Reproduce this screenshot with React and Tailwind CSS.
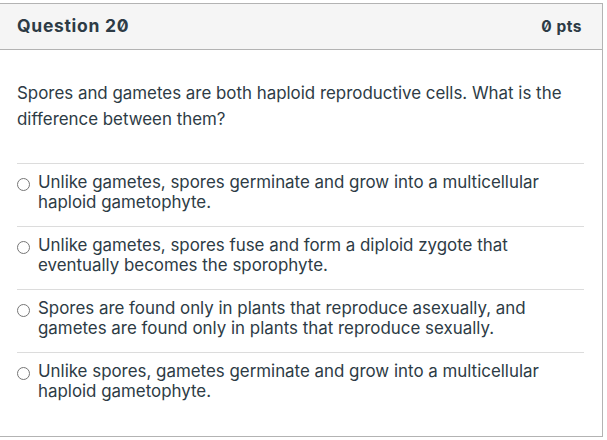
import React from "react";

const options = [
  "Unlike gametes, spores germinate and grow into a multicellular haploid gametophyte.",
  "Unlike gametes, spores fuse and form a diploid zygote that eventually becomes the sporophyte.",
  "Spores are found only in plants that reproduce asexually, and gametes are found only in plants that reproduce sexually.",
  "Unlike spores, gametes germinate and grow into a multicellular haploid gametophyte.",
];

export default function App() {
  return (
    <div className="w-[607px] h-[440px] overflow-hidden bg-white pt-[3px]" style={{ fontFamily: "Inter, 'Liberation Sans', sans-serif" }}>
      <div className="-ml-px w-[604px] h-[434px] border border-[#b3b3b3] text-[#2d3b45]">
        <div className="h-[46px] bg-[#f5f5f5] border-b border-[#b3b3b3] flex items-center justify-between pl-[17px] pr-[20px]">
          <span className="text-[17.5px] font-bold slashed-zero tracking-[0.7px]">Question 20</span>
          <span className="text-[15.5px] font-bold slashed-zero tracking-[0.5px] text-[#2d3b45]">0 pts</span>
        </div>
        <div className="pl-[17px] pr-[18px]">
          <p className="pt-[30px] text-[16.9px] leading-[26px] pr-2">
            Spores and gametes are both haploid reproductive cells. What is the difference between them?
          </p>
          <div className="mt-[31px]">
            {options.map((o, i) => (
              <div key={i} className="border-t border-[#dcdcdc] pt-[8px] pb-[14px] flex">
                <span className="mt-[6px] w-[13px] h-[13px] shrink-0 rounded-full border border-[#767676] bg-white" />
                <span className="ml-[8px] text-[16.9px] leading-[20px] pr-[30px]">{o}</span>
              </div>
            ))}
          </div>
        </div>
      </div>
    </div>
  );
}
